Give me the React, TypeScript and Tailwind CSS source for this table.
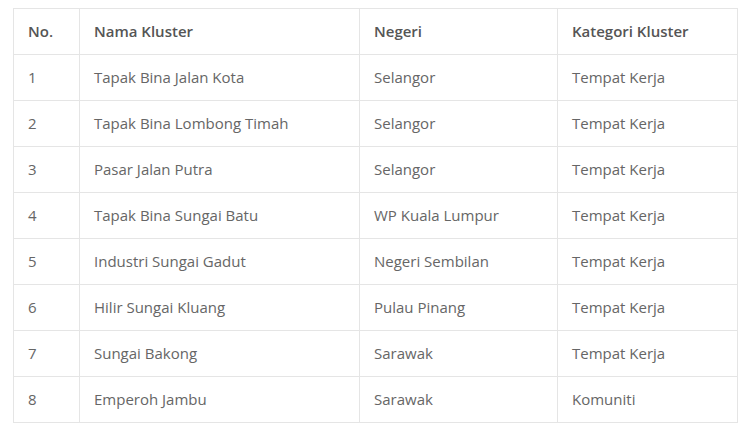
import React from "react";

const rows: [string, string, string, string][] = [
  ["1", "Tapak Bina Jalan Kota", "Selangor", "Tempat Kerja"],
  ["2", "Tapak Bina Lombong Timah", "Selangor", "Tempat Kerja"],
  ["3", "Pasar Jalan Putra", "Selangor", "Tempat Kerja"],
  ["4", "Tapak Bina Sungai Batu", "WP Kuala Lumpur", "Tempat Kerja"],
  ["5", "Industri Sungai Gadut", "Negeri Sembilan", "Tempat Kerja"],
  ["6", "Hilir Sungai Kluang", "Pulau Pinang", "Tempat Kerja"],
  ["7", "Sungai Bakong", "Sarawak", "Tempat Kerja"],
  ["8", "Emperoh Jambu", "Sarawak", "Komuniti"],
];

export default function App() {
  return (
    <div
      className="w-[756px] h-[436px] bg-white pt-[8px] pl-[13px]"
      style={{ fontFamily: '"Open Sans", sans-serif' }}
    >
      <table className="border-collapse border border-[#e5e5e5] text-[15px] table-fixed w-[724px]">
        <colgroup>
          <col className="w-[66px]" />
          <col className="w-[280px]" />
          <col className="w-[198px]" />
          <col className="w-[180px]" />
        </colgroup>
        <thead>
          <tr className="h-[46px]">
            {["No.", "Nama Kluster", "Negeri", "Kategori Kluster"].map((h) => (
              <th
                key={h}
                className="border border-[#e5e5e5] px-[14px] text-left font-semibold text-[#555] align-middle"
              >
                {h}
              </th>
            ))}
          </tr>
        </thead>
        <tbody>
          {rows.map((r) => (
            <tr key={r[0]} className="h-[46px]">
              {r.map((c, i) => (
                <td
                  key={i}
                  className="border border-[#e5e5e5] px-[14px] text-[#666] align-middle"
                >
                  {c}
                </td>
              ))}
            </tr>
          ))}
        </tbody>
      </table>
    </div>
  );
}
